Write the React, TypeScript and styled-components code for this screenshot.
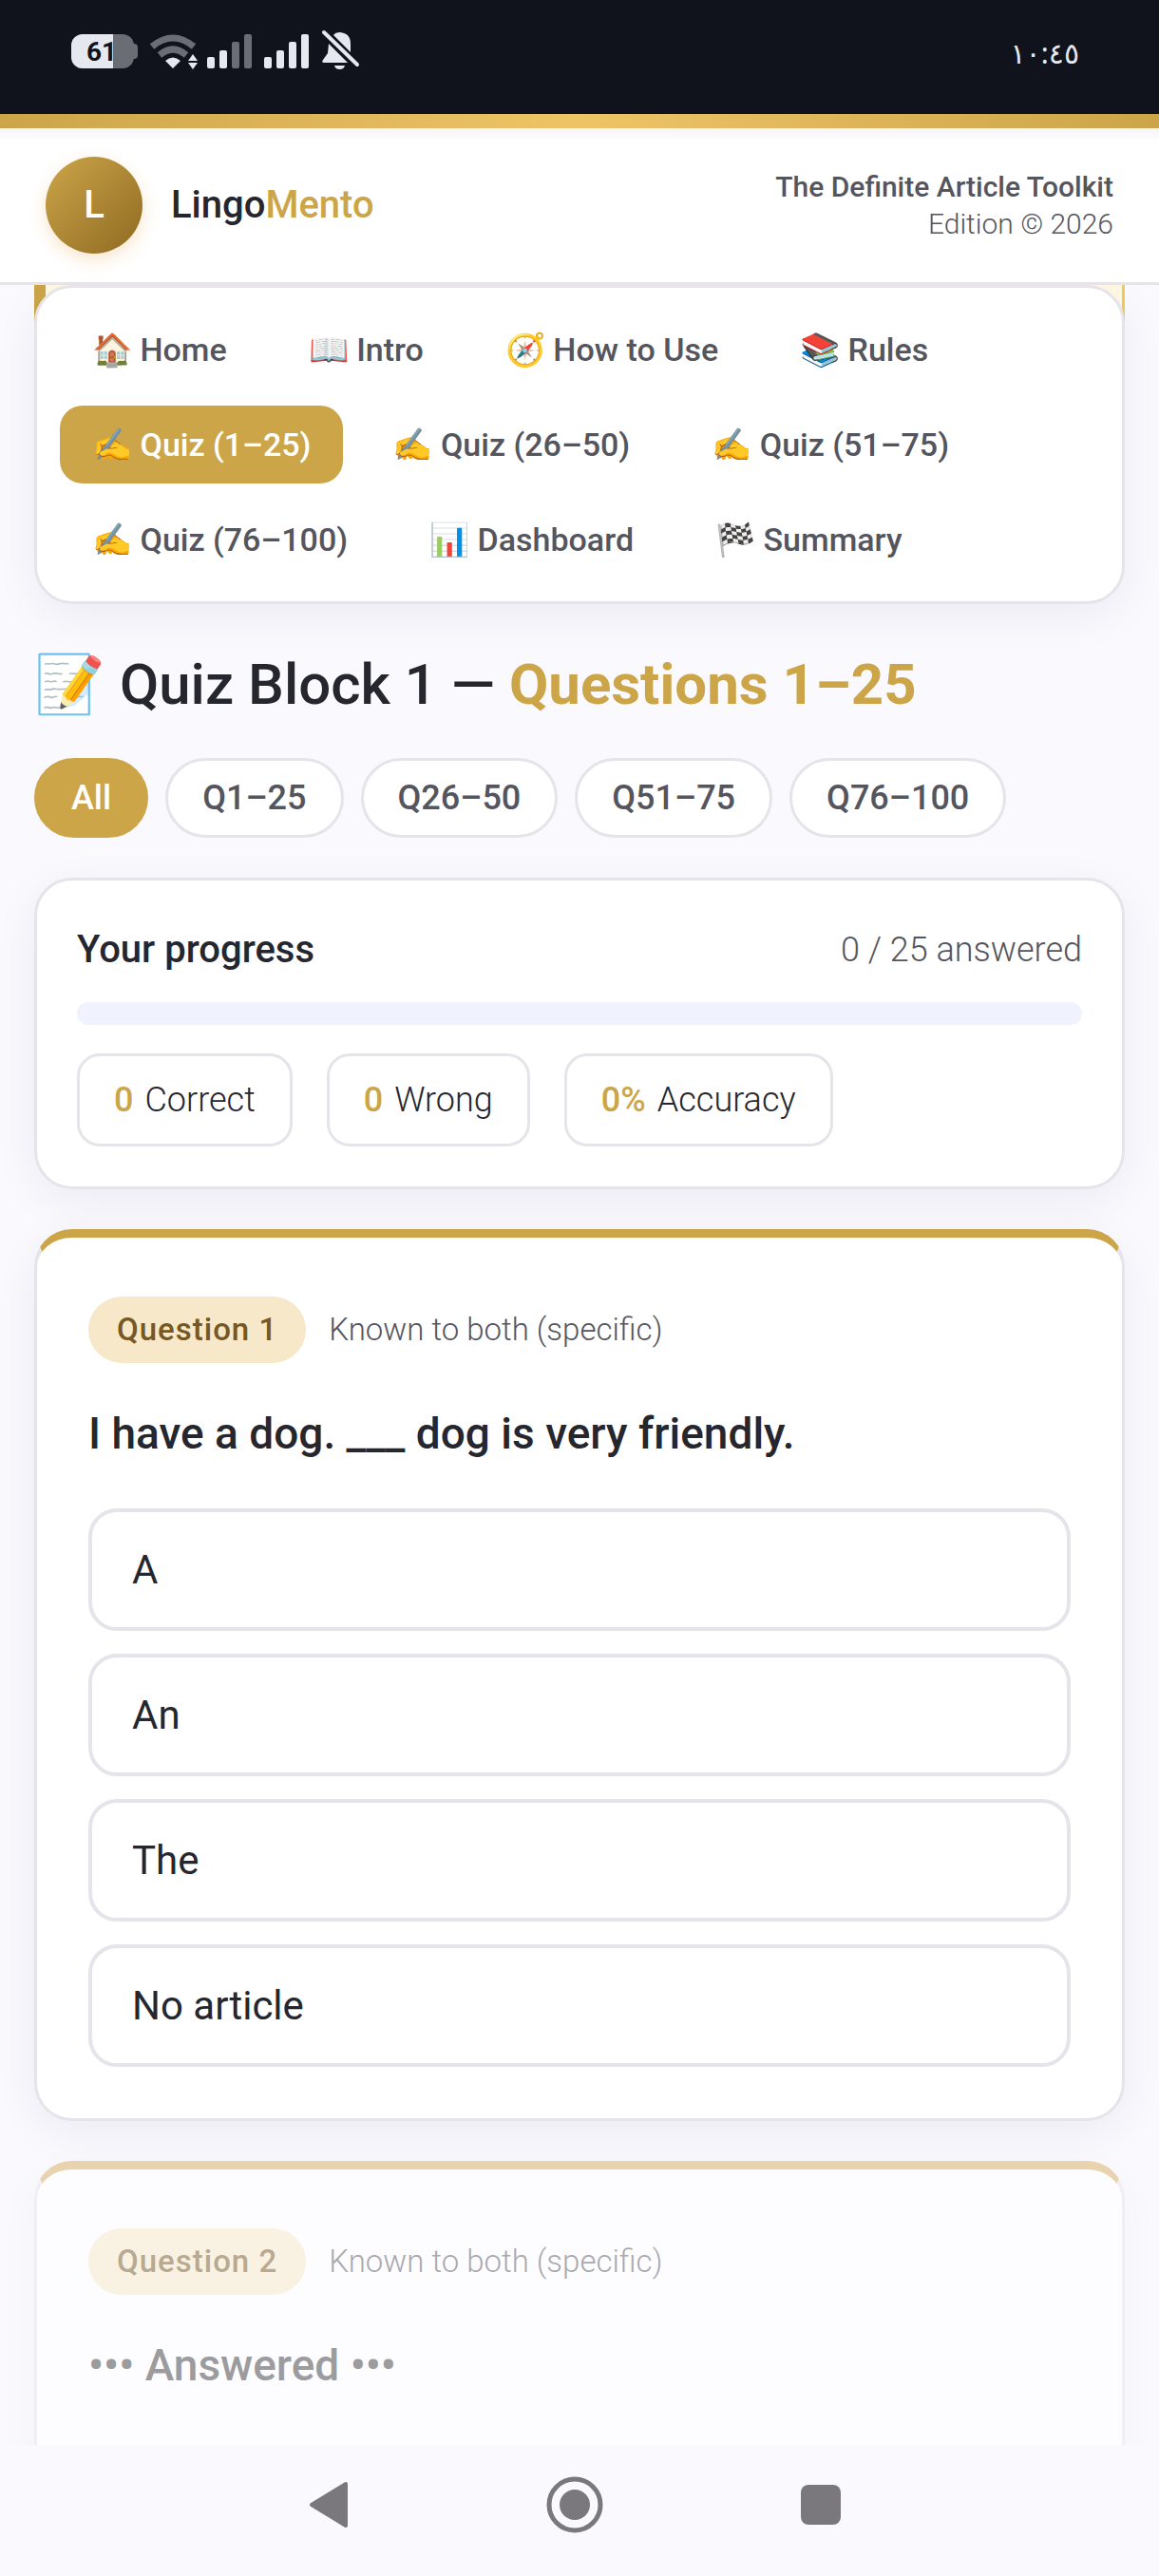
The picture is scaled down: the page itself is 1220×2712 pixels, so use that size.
import React from "react";
import styled, { createGlobalStyle, css } from "styled-components";

const gold = "#cca549";
const ink = "#25262e";
const slate = "#55555e";
const line = "#e6e4ea";
const medium = 500;

const GlobalStyle = createGlobalStyle`
  * { box-sizing: border-box; }
  body {
    margin: 0;
    background: #faf9fe;
    color: ${ink};
    font-family: Roboto, "Noto Sans", sans-serif;
    font-size: 36px;
    line-height: 42px;
  }
  button, a { font: inherit; color: inherit; text-decoration: none; }
  h1, h2, p, ul { margin: 0; padding: 0; font-weight: inherit; list-style: none; }
`;

const Screen = styled.div`
  height: 100vh;
  display: flex;
  flex-direction: column;
`;

const StatusBar = styled.div`
  flex: none;
  height: 120px;
  padding: 0 84px 12px 75px;
  display: flex;
  align-items: center;
  justify-content: space-between;
  background: #10131b;
  color: #e6e8f0;
`;

const StatusIcons = styled.svg`
  width: 310px;
  height: 64px;
  display: block;
`;

const Clock = styled.time`
  padding-top: 4px;
  font-family: "Noto Sans", "DejaVu Sans", sans-serif;
  font-size: 30px;
  line-height: 40px;
`;

const GoldRule = styled.div`
  flex: none;
  height: 15px;
  background: linear-gradient(90deg, ${gold}, #edc466 50%, ${gold});
`;

const Header = styled.header`
  flex: none;
  display: flex;
  align-items: center;
  justify-content: space-between;
  padding: 30px 48px;
  background: linear-gradient(#f5f5f6, #ffffff 14px);
  border-bottom: 3px solid ${line};
`;

const Brand = styled.div`
  display: flex;
  align-items: center;
  gap: 30px;
  font-size: 40px;
  font-weight: ${medium};
`;

const Logo = styled.span`
  width: 102px;
  height: 102px;
  display: grid;
  place-items: center;
  border-radius: 50%;
  background: linear-gradient(135deg, #cca549, #8f6a22);
  box-shadow: 0 6px 18px rgba(230, 160, 70, 0.28);
  color: #fff;
`;

const Gold = styled.span<{ $weight?: number }>`
  color: ${gold};
  font-weight: ${(p) => p.$weight ?? "inherit"};
`;

const Edition = styled.p`
  font-size: 30px;
  line-height: 39px;
  font-weight: 300;
  color: ${slate};
  text-align: right;

  strong { display: block; font-weight: ${medium}; }
`;

const Main = styled.main`
  flex: 1;
  min-height: 0;
  overflow-y: auto;
  scrollbar-width: none;
  padding: 0 36px;
`;

const cardFrame = css`
  background: #fff;
  border: 3px solid ${line};
  border-radius: 40px;
  box-shadow: 0 12px 48px rgba(30, 25, 70, 0.06);
`;

const NavBackdrop = styled.div`
  background:
    linear-gradient(${gold}, ${gold}) left top / 12px 40px no-repeat,
    linear-gradient(#f0cc5c, #f0cc5c) right top / 3px 40px no-repeat,
    linear-gradient(#fff9e4, #fff9e4) left top / 100% 40px no-repeat;
`;

const NavCard = styled.nav`
  ${cardFrame}
  padding: 24px;
  display: flex;
  flex-wrap: wrap;
  gap: 18px;
`;

const NavLink = styled.a`
  padding: 20px 34px;
  border-radius: 24px;
  font-size: 34px;
  font-weight: ${medium};
  color: ${slate};

  &[aria-current="page"] { background: ${gold}; color: #fff; }
`;

const Title = styled.h1`
  margin: 46px 0 38px;
  font-size: 60px;
  line-height: 78px;
  font-weight: ${medium};
`;

const Filters = styled.div`
  display: flex;
  flex-wrap: wrap;
  gap: 18px;
`;

const Chip = styled.button`
  padding: 18px 36px;
  border: 3px solid ${line};
  border-radius: 42px;
  background: #fff;
  color: ${slate};
  font-weight: ${medium};

  &[aria-pressed="true"] { background: ${gold}; border-color: ${gold}; color: #fff; }
`;

const ProgressCard = styled.section`
  ${cardFrame}
  margin-top: 42px;
  padding: 42px;
`;

const ProgressHead = styled.div`
  display: flex;
  justify-content: space-between;
  align-items: center;
  font-weight: 300;
  color: ${slate};
`;

const ProgressTitle = styled.h2`
  font-size: 40px;
  line-height: 62px;
  font-weight: ${medium};
  color: ${ink};
`;

const Track = styled.div`
  height: 24px;
  margin: 24px 0 30px;
  border-radius: 12px;
  background: #f0f3fd;
  overflow: hidden;
`;

const Fill = styled.div`
  height: 100%;
  background: ${gold};
`;

const Stats = styled.ul`
  display: flex;
  flex-wrap: wrap;
  gap: 36px;
`;

const Stat = styled.li`
  display: flex;
  gap: 12px;
  padding: 25px 36px;
  border: 3px solid ${line};
  border-radius: 24px;
  font-weight: 300;
`;

const QuestionCard = styled.section<{ $done?: boolean }>`
  ${cardFrame}
  margin-top: 42px;
  padding: 62px 54px 54px;
  border-top: 9px solid ${gold};
  ${(p) =>
    p.$done &&
    css`
      min-height: 480px;
      background: rgba(255, 255, 255, 0.6);
      border-color: #f1eff5;
      border-top-color: #e9d2ae;
      box-shadow: 0 12px 48px rgba(30, 25, 70, 0.03);
    `}
`;

const QuestionMeta = styled.div<{ $done?: boolean }>`
  display: flex;
  align-items: center;
  gap: 24px;
  font-size: 33px;
  font-weight: 300;
  color: ${slate};
  opacity: ${(p) => (p.$done ? 0.5 : 1)};
`;

const Badge = styled.span`
  padding: 14px 30px;
  border-radius: 35px;
  background: #f6e8c8;
  color: #755823;
  font-weight: ${medium};
  letter-spacing: 1px;
`;

const Prompt = styled.p<{ $done?: boolean }>`
  margin: 41px 0 46px;
  font-size: 46px;
  line-height: 66px;
  font-weight: ${medium};
  color: ${(p) => (p.$done ? "#9c9c9f" : ink)};
`;

const Options = styled.div`
  display: flex;
  flex-direction: column;
  gap: 24px;
`;

const Option = styled.button`
  padding: 36px 42px;
  border: 4px solid ${line};
  border-radius: 30px;
  background: #fff;
  color: ${ink};
  font-size: 42px;
  line-height: 49px;
  text-align: left;
`;

const SystemNav = styled.div`
  flex: none;
  height: 138px;
  padding: 0 310px 12px 300px;
  display: flex;
  align-items: center;
  justify-content: space-between;
  background: #faf9fe;
  color: #7a787d;
`;

const SystemButton = styled.button`
  width: 92px;
  height: 92px;
  padding: 16px;
  border: 0;
  background: none;

  svg { display: block; width: 60px; height: 60px; }
`;

const navItems = [
  "🏠 Home",
  "📖 Intro",
  "🧭 How to Use",
  "📚 Rules",
  "✍️ Quiz (1–25)",
  "✍️ Quiz (26–50)",
  "✍️ Quiz (51–75)",
  "✍️ Quiz (76–100)",
  "📊 Dashboard",
  "🏁 Summary",
];

const filters = ["All", "Q1–25", "Q26–50", "Q51–75", "Q76–100"];

const stats = [
  { value: "0", label: "Correct" },
  { value: "0", label: "Wrong" },
  { value: "0%", label: "Accuracy" },
];

const options = ["A", "An", "The", "No article"];

const answered = 0;
const total = 25;

function DeviceStatus() {
  return (
    <StatusIcons viewBox="75 22 310 64" role="img" aria-label="Battery 61 percent">
      <defs>
        <clipPath id="level"><rect x="75" y="30" width="44" height="50" /></clipPath>
      </defs>
      <path d="M136 46h5q4 0 4 4v8q0 4-4 4h-5z" fill="#6b6d75" />
      <rect x="75" y="36" width="66" height="36" rx="12" fill="#6b6d75" />
      <rect x="75" y="36" width="66" height="36" rx="12" fill="#e6e8f0" clipPath="url(#level)" />
      <text x="107" y="64" textAnchor="middle" fontFamily="Roboto, sans-serif" fontSize="28" fontWeight="700" fill="#10131b">61</text>
      <g fill="none" stroke="#6b6d75" strokeWidth="7">
        <path d="M160 49q22-18 44 0" />
        <path d="M168 58q14-12 28 0" />
      </g>
      <path d="M182 72l-8-8q8-7 16 0z" fill="currentColor" />
      <path d="M203 57l5 7h-10zM203 73l5-7h-10z" fill="currentColor" />
      <g fill="currentColor">
        <rect x="218" y="60" width="8" height="12" rx="2" />
        <rect x="231" y="53" width="8" height="19" rx="2" />
        <rect x="244" y="44" width="8" height="28" rx="2" fill="#6b6d75" />
        <rect x="257" y="36" width="8" height="36" rx="2" fill="#6b6d75" />
        <rect x="278" y="60" width="8" height="12" rx="2" />
        <rect x="291" y="53" width="8" height="19" rx="2" />
        <rect x="304" y="44" width="8" height="28" rx="2" />
        <rect x="317" y="36" width="8" height="36" rx="2" />
        <path d="M346 46L366 66H341Q338 66 340 63L345 56ZM351 37Q353 34 358 34Q369 35 369 46V55ZM352 69h11q-1 4-5.500 4T352 69z" />
      </g>
      <path d="M341 34L376 68" stroke="currentColor" strokeWidth="4" strokeLinecap="round" />
    </StatusIcons>
  );
}

export default function App() {
  return (
    <Screen>
      <GlobalStyle />
      <StatusBar>
        <DeviceStatus />
        <Clock dateTime="10:45">١٠:٤٥</Clock>
      </StatusBar>
      <GoldRule />
      <Header>
        <Brand>
          <Logo>L</Logo>
          <span>Lingo<Gold>Mento</Gold></span>
        </Brand>
        <Edition>
          <strong>The Definite Article Toolkit</strong>
          Edition © 2026
        </Edition>
      </Header>

      <Main>
        <NavBackdrop>
          <NavCard>
            {navItems.map((item, i) => (
              <NavLink key={item} href="#" aria-current={i === 4 ? "page" : undefined}>{item}</NavLink>
            ))}
          </NavCard>
        </NavBackdrop>

        <Title>📝 Quiz Block 1 — <Gold $weight={700}>Questions 1–25</Gold></Title>

        <Filters>
          {filters.map((name, i) => (
            <Chip key={name} type="button" aria-pressed={i === 0}>{name}</Chip>
          ))}
        </Filters>

        <ProgressCard>
          <ProgressHead>
            <ProgressTitle>Your progress</ProgressTitle>
            <span>{`${answered} / ${total} answered`}</span>
          </ProgressHead>
          <Track><Fill style={{ width: `${(answered / total) * 100}%` }} /></Track>
          <Stats>
            {stats.map((s) => (
              <Stat key={s.label}><Gold $weight={medium}>{s.value}</Gold><span>{s.label}</span></Stat>
            ))}
          </Stats>
        </ProgressCard>

        <QuestionCard>
          <QuestionMeta>
            <Badge>Question 1</Badge>
            <span>Known to both (specific)</span>
          </QuestionMeta>
          <Prompt>I have a dog. ___ dog is very friendly.</Prompt>
          <Options>
            {options.map((o) => <Option key={o} type="button">{o}</Option>)}
          </Options>
        </QuestionCard>

        <QuestionCard $done>
          <QuestionMeta $done>
            <Badge>Question 2</Badge>
            <span>Known to both (specific)</span>
          </QuestionMeta>
          <Prompt $done>••• Answered •••</Prompt>
        </QuestionCard>
      </Main>

      <SystemNav>
        <SystemButton type="button" aria-label="Back">
          <svg viewBox="0 0 60 60"><path d="M48 8v44L12 30z" fill="currentColor" stroke="currentColor" strokeWidth="4" strokeLinejoin="round" /></svg>
        </SystemButton>
        <SystemButton type="button" aria-label="Home">
          <svg viewBox="0 0 60 60">
            <circle cx="30" cy="30" r="27" fill="none" stroke="currentColor" strokeWidth="5" />
            <circle cx="30" cy="30" r="16" fill="currentColor" />
          </svg>
        </SystemButton>
        <SystemButton type="button" aria-label="Recent apps">
          <svg viewBox="0 0 60 60"><rect x="9" y="9" width="42" height="42" rx="8" fill="currentColor" /></svg>
        </SystemButton>
      </SystemNav>
    </Screen>
  );
}
